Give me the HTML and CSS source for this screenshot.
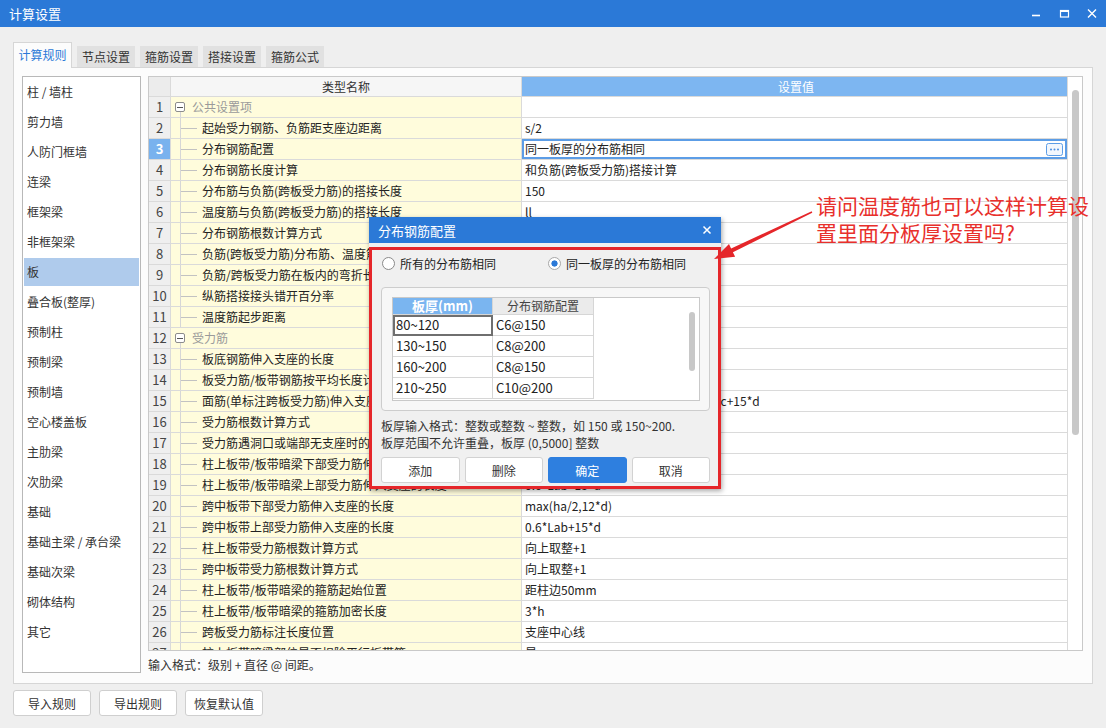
FILE: index.html
```html
<!DOCTYPE html>
<html lang="zh-CN">
<head>
<meta charset="utf-8">
<title>计算设置</title>
<link rel="stylesheet" href="styles.css">
</head>
<body>
<div class="window">
  <header class="titlebar">
    <span class="title">计算设置</span>
    <div class="controls">
      <svg class="ctrl" width="28" height="27" viewBox="0 0 28 27"><line x1="10" y1="15.5" x2="18" y2="15.5" stroke="#fff" stroke-width="1.6"/></svg>
      <svg class="ctrl" width="28" height="27" viewBox="0 0 28 27"><rect x="10.5" y="10.5" width="8" height="6.5" fill="none" stroke="#fff" stroke-width="1.2"/><line x1="10" y1="11" x2="19" y2="11" stroke="#fff" stroke-width="2"/></svg>
      <svg class="ctrl" width="28" height="27" viewBox="0 0 28 27"><path d="M10 9.5 L18 17.5 M18 9.5 L10 17.5" stroke="#fff" stroke-width="1.4"/></svg>
    </div>
  </header>

  <main class="content">
    <nav class="tabs">
      <div class="tab active">计算规则</div>
      <div class="tab">节点设置</div>
      <div class="tab">箍筋设置</div>
      <div class="tab">搭接设置</div>
      <div class="tab">箍筋公式</div>
    </nav>

    <section class="panel">
      <ul class="sidebar">
        <li>柱 / 墙柱</li>
        <li>剪力墙</li>
        <li>人防门框墙</li>
        <li>连梁</li>
        <li>框架梁</li>
        <li>非框架梁</li>
        <li class="selected">板</li>
        <li>叠合板(整厚)</li>
        <li>预制柱</li>
        <li>预制梁</li>
        <li>预制墙</li>
        <li>空心楼盖板</li>
        <li>主肋梁</li>
        <li>次肋梁</li>
        <li>基础</li>
        <li>基础主梁 / 承台梁</li>
        <li>基础次梁</li>
        <li>砌体结构</li>
        <li>其它</li>
      </ul>

      <div class="tablearea">
        <div class="gridbox">
          <div class="gridbody">
            <div class="row head"><div class="num"></div><div class="name">类型名称</div><div class="val">设置值</div></div>
            <div class="row"><div class="num">1</div><div class="name g first"><span class="toggle"></span><span class="gtext">公共设置项</span></div><div class="val"></div></div>
            <div class="row"><div class="num">2</div><div class="name c">起始受力钢筋、负筋距支座边距离</div><div class="val">s/2</div></div>
            <div class="row"><div class="num cur">3</div><div class="name c">分布钢筋配置</div><div class="val sel"><span>同一板厚的分布筋相同</span><svg class="more" width="17" height="13" viewBox="0 0 17 13"><rect x="0.5" y="0.5" width="16" height="12" rx="2" fill="#f2f7fd" stroke="#5c9de6"/><circle cx="5" cy="6.5" r="1" fill="#4a8ee0"/><circle cx="8.5" cy="6.5" r="1" fill="#4a8ee0"/><circle cx="12" cy="6.5" r="1" fill="#4a8ee0"/></svg></div></div>
            <div class="row"><div class="num">4</div><div class="name c">分布钢筋长度计算</div><div class="val">和负筋(跨板受力筋)搭接计算</div></div>
            <div class="row"><div class="num">5</div><div class="name c">分布筋与负筋(跨板受力筋)的搭接长度</div><div class="val">150</div></div>
            <div class="row"><div class="num">6</div><div class="name c">温度筋与负筋(跨板受力筋)的搭接长度</div><div class="val">ll</div></div>
            <div class="row"><div class="num">7</div><div class="name c">分布钢筋根数计算方式</div><div class="val">向下取整+1</div></div>
            <div class="row"><div class="num">8</div><div class="name c">负筋(跨板受力筋)分布筋、温度筋是否带弯折</div><div class="val">否</div></div>
            <div class="row"><div class="num">9</div><div class="name c">负筋/跨板受力筋在板内的弯折长度</div><div class="val">板厚-2*保护层</div></div>
            <div class="row"><div class="num">10</div><div class="name c">纵筋搭接接头错开百分率</div><div class="val">50%</div></div>
            <div class="row"><div class="num">11</div><div class="name c">温度筋起步距离</div><div class="val">s</div></div>
            <div class="row"><div class="num">12</div><div class="name g"><span class="toggle"></span><span class="gtext">受力筋</span></div><div class="val"></div></div>
            <div class="row"><div class="num">13</div><div class="name c">板底钢筋伸入支座的长度</div><div class="val">max(ha/2,5*d)</div></div>
            <div class="row"><div class="num">14</div><div class="name c">板受力筋/板带钢筋按平均长度计算</div><div class="val">否</div></div>
            <div class="row"><div class="num">15</div><div class="name c">面筋(单标注跨板受力筋)伸入支座的锚固长度</div><div class="val">能直锚就直锚,否则按公式计算:ha-bhc+15*d</div></div>
            <div class="row"><div class="num">16</div><div class="name c">受力筋根数计算方式</div><div class="val">向上取整+1</div></div>
            <div class="row"><div class="num">17</div><div class="name c">受力筋遇洞口或端部无支座时的弯折长度</div><div class="val">板厚-2*保护层</div></div>
            <div class="row"><div class="num">18</div><div class="name c">柱上板带/板带暗梁下部受力筋伸入支座的长度</div><div class="val">ha-bhc+15*d</div></div>
            <div class="row"><div class="num">19</div><div class="name c">柱上板带/板带暗梁上部受力筋伸入支座的长度</div><div class="val">0.6*Lab+15*d</div></div>
            <div class="row"><div class="num">20</div><div class="name c">跨中板带下部受力筋伸入支座的长度</div><div class="val">max(ha/2,12*d)</div></div>
            <div class="row"><div class="num">21</div><div class="name c">跨中板带上部受力筋伸入支座的长度</div><div class="val">0.6*Lab+15*d</div></div>
            <div class="row"><div class="num">22</div><div class="name c">柱上板带受力筋根数计算方式</div><div class="val">向上取整+1</div></div>
            <div class="row"><div class="num">23</div><div class="name c">跨中板带受力筋根数计算方式</div><div class="val">向上取整+1</div></div>
            <div class="row"><div class="num">24</div><div class="name c">柱上板带/板带暗梁的箍筋起始位置</div><div class="val">距柱边50mm</div></div>
            <div class="row"><div class="num">25</div><div class="name c">柱上板带/板带暗梁的箍筋加密长度</div><div class="val">3*h</div></div>
            <div class="row"><div class="num">26</div><div class="name c">跨板受力筋标注长度位置</div><div class="val">支座中心线</div></div>
            <div class="row"><div class="num">27</div><div class="name c">柱上板带暗梁部位是否扣除平行板带筋</div><div class="val">是</div></div>
          </div>
          <div class="vscroll"><div class="thumb"></div></div>
        </div>
        <div class="hint">输入格式：级别 + 直径 @ 间距。</div>
      </div>
    </section>

    <footer class="actions">
      <div class="btn">导入规则</div>
      <div class="btn">导出规则</div>
      <div class="btn">恢复默认值</div>
    </footer>
  </main>

  <div class="dialog">
    <div class="dlg-title">
      <span>分布钢筋配置</span>
      <svg class="dlg-close" width="10" height="10" viewBox="0 0 10 10"><path d="M1.5 1.5 L8.5 8.5 M8.5 1.5 L1.5 8.5" stroke="#fff" stroke-width="1.5"/></svg>
    </div>
    <div class="dlg-body">
      <div class="radios">
        <div class="radio"><span class="dot"></span><span>所有的分布筋相同</span></div>
        <div class="radio"><span class="dot on"></span><span>同一板厚的分布筋相同</span></div>
      </div>
      <div class="groupbox">
        <div class="sgrid">
          <div class="stable">
            <div class="srow shead"><div class="sh1">板厚(mm)</div><div class="sh2">分布钢筋配置</div></div>
            <div class="srow"><div class="scell focus">80~120</div><div class="scell">C6@150</div></div>
            <div class="srow"><div class="scell">130~150</div><div class="scell">C8@200</div></div>
            <div class="srow"><div class="scell">160~200</div><div class="scell">C8@150</div></div>
            <div class="srow"><div class="scell">210~250</div><div class="scell">C10@200</div></div>
          </div>
          <div class="sthumb"></div>
        </div>
      </div>
      <p class="note">板厚输入格式：整数或整数 ~ 整数，如 150 或 150~200.<br>板厚范围不允许重叠，板厚 (0,5000] 整数</p>
      <div class="dlg-btns">
        <div class="dbtn">添加</div>
        <div class="dbtn">删除</div>
        <div class="dbtn primary">确定</div>
        <div class="dbtn">取消</div>
      </div>
    </div>
  </div>

  <svg class="arrow" width="120" height="70" viewBox="0 0 120 70">
    <polygon points="14,59 29,44.1 31.1,48.6 111.7,11.3 112.3,12.7 32.9,52.2 35.1,56.7" fill="#e5262a"/>
  </svg>
  <div class="annotation">请问温度筋也可以这样计算设<br>置里面分板厚设置吗?</div>
</div>
</body>
</html>
```

FILE: styles.css
```css
* {
  box-sizing: border-box;
  margin: 0;
  padding: 0;
}

html,
body {
  width: 1106px;
  height: 728px;
  overflow: hidden;
}

body {
  font-family: "Noto Sans CJK SC", "Noto Sans", sans-serif;
  font-size: 12px;
  color: #333;
  background: #efefef;
}

.window {
  position: relative;
  width: 1106px;
  height: 728px;
  background: #efefef;
}

/* title bar */
.titlebar {
  height: 27px;
  background: #2b79d7;
  color: #fff;
  display: flex;
  align-items: center;
}

.title {
  padding-left: 9px;
  font-size: 13px;
  line-height: 27px;
}

.controls {
  margin-left: auto;
  display: flex;
}

.ctrl {
  display: block;
}

/* main area */
.content {
  padding: 15px 13px 0;
}

.tabs {
  display: flex;
  align-items: flex-end;
  gap: 5px;
  height: 25px;
}

.tab {
  width: 58px;
  height: 21px;
  line-height: 21px;
  text-align: center;
  background: #e1e1e1;
  color: #333;
}

.tab.active {
  width: 59px;
  height: 26px;
  line-height: 24px;
  margin-bottom: -1px;
  background: #fcfcfc;
  color: #2b79d7;
  border: 1px solid #d6d6d6;
  border-bottom: none;
  position: relative;
  z-index: 1;
}

.panel {
  height: 617px;
  background: #fcfcfc;
  border: 1px solid #d6d6d6;
  padding: 8px 9px 10px 8px;
  display: flex;
  gap: 7px;
}

/* sidebar */
.sidebar {
  list-style: none;
  width: 119px;
  flex: none;
  background: #fff;
  border: 1px solid #b8b8b8;
  padding: 1px 1px;
}

.sidebar li {
  height: 28px;
  line-height: 28px;
  margin-bottom: 2px;
  padding-left: 3px;
  color: #333;
  white-space: nowrap;
}

.sidebar li.selected {
  background: #afcbec;
}

/* table */
.tablearea {
  flex: 1;
  display: flex;
  flex-direction: column;
  min-width: 0;
}

.gridbox {
  height: 575px;
  border: 1px solid #c9c9c9;
  background: #fff;
  display: flex;
}

.gridbody {
  flex: 1;
  overflow: hidden;
}

.row {
  display: grid;
  grid-template-columns: 22px 351px 1fr;
  height: 21px;
}

.row > div {
  border-right: 1px solid #dadada;
  border-bottom: 1px solid #dadada;
  line-height: 20px;
  white-space: nowrap;
  overflow: hidden;
}

.row.head {
  height: 20px;
}

.row.head > div {
  line-height: 19px;
}

.num {
  background: #efefef;
  text-align: center;
  font-size: 13px;
  color: #444;
}

.num.cur {
  background: #79b2ee;
  color: #fff;
  font-weight: bold;
}

.name {
  background: #fffcdc;
  color: #222;
}

.head .num {
  background: #ececec;
}

.head .name {
  background: #f6f6f6;
  text-align: center;
  color: #333;
}

.head .val {
  background: #7db6f1;
  color: #fff;
  text-align: center;
}

.name.c {
  padding-left: 31px;
  background:
    linear-gradient(#d6d6d6, #d6d6d6) 9px 0 / 1px 100% no-repeat,
    linear-gradient(#c2c2c2, #c2c2c2) 10px 10px / 16px 1px no-repeat,
    #fffcdc;
}

.name.g {
  display: flex;
  align-items: center;
  background:
    linear-gradient(#d6d6d6, #d6d6d6) 9px 15px / 1px 6px no-repeat,
    #fffcdc;
}

.toggle {
  width: 10px;
  height: 10px;
  margin-left: 4px;
  border: 1px solid #8c8c8c;
  border-radius: 2px;
  background: linear-gradient(#555, #555) center / 6px 1px no-repeat, #fff;
  flex: none;
}

.gtext {
  margin-left: 7px;
  color: #9a9a9a;
}

.val {
  padding-left: 3px;
  color: #222;
}

.val.sel {
  display: flex;
  align-items: center;
  padding-right: 4px;
  box-shadow: inset 0 0 0 2px #5c9de6;
}

.more {
  margin-left: auto;
  flex: none;
}

.vscroll {
  width: 14px;
  flex: none;
  background: #fff;
}

.thumb {
  width: 7px;
  height: 345px;
  margin: 13px 0 0 4px;
  border-radius: 4px;
  background: #c8c8c8;
}

.hint {
  padding-top: 3px;
  line-height: 22px;
  color: #333;
}

/* footer */
.actions {
  display: flex;
  gap: 8px;
  margin-top: 6px;
}

.btn {
  width: 78px;
  height: 26px;
  border: 1px solid #cfcfcf;
  border-radius: 3px;
  background: #fff;
  display: flex;
  align-items: center;
  justify-content: center;
  color: #333;
}

/* dialog */
.dialog {
  position: absolute;
  left: 369px;
  top: 217px;
  width: 352px;
  background: #f0f0f0;
  box-shadow: 1px 2px 5px rgba(0, 0, 0, 0.35);
  z-index: 5;
}

.dlg-title {
  height: 26px;
  background: #2b79d7;
  color: #fff;
  display: flex;
  align-items: center;
  padding: 0 9px;
  font-size: 13px;
}

.dlg-close {
  margin-left: auto;
}

.dlg-body {
  margin-top: 4px;
  border: 3px solid #e5262a;
  padding-bottom: 3px;
}

.radios {
  display: grid;
  grid-template-columns: 166px auto;
  height: 26px;
  padding-left: 10px;
  align-items: center;
}

.radio {
  display: flex;
  align-items: center;
  gap: 5px;
  color: #222;
}

.dot {
  width: 13px;
  height: 13px;
  border-radius: 50%;
  border: 1px solid #8a8a8a;
  background: #fff;
  flex: none;
}

.dot.on {
  border-color: #a8a8a8;
  background: radial-gradient(circle, #2b79d7 0 2.8px, #fff 3.4px);
}

.groupbox {
  margin: 11px 8px 0 9px;
  height: 124px;
  border: 1px solid #cdcdcd;
  border-radius: 4px;
  background: #f7f7f7;
  padding: 9px 9px 9px 10px;
}

.sgrid {
  height: 104px;
  border: 1px solid #c9c9c9;
  background: #fff;
  display: flex;
}

.stable {
  width: 201px;
  flex: none;
}

.srow {
  display: grid;
  grid-template-columns: 100px 101px;
  height: 21px;
}

.srow.shead {
  height: 17px;
}

.srow > div {
  border-right: 1px solid #d6d6d6;
  border-bottom: 1px solid #d6d6d6;
  white-space: nowrap;
}

.sh1 {
  background: #7ab5f0;
  color: #fff;
  font-weight: bold;
  font-size: 13px;
  text-align: center;
  line-height: 16px;
}

.sh2 {
  background: #ebebeb;
  color: #444;
  text-align: center;
  line-height: 16px;
}

.scell {
  padding-left: 3px;
  font-size: 13px;
  line-height: 20px;
  color: #222;
}

.scell.focus {
  outline: 2px solid #6f6f6f;
  outline-offset: -2px;
}

.sthumb {
  width: 6px;
  height: 59px;
  margin: 14px 4px 0 auto;
  border-radius: 3px;
  background: #c8c8c8;
}

.note {
  padding: 6px 0 0 9px;
  line-height: 17px;
  color: #333;
}

.dlg-btns {
  display: flex;
  gap: 5px;
  margin: 6px 8px 0 9px;
}

.dbtn {
  flex: 1;
  height: 26px;
  border: 1px solid #d2d2d2;
  border-radius: 3px;
  background: #fff;
  display: flex;
  align-items: center;
  justify-content: center;
  color: #333;
}

.dbtn.primary {
  background: #2e7fdf;
  border-color: #2e7fdf;
  color: #fff;
}

/* annotation overlay */
.arrow {
  position: absolute;
  left: 700px;
  top: 200px;
  z-index: 6;
}

.annotation {
  position: absolute;
  left: 816px;
  top: 192px;
  font-size: 21px;
  line-height: 27px;
  color: #e8302c;
  white-space: nowrap;
  z-index: 6;
}
```
